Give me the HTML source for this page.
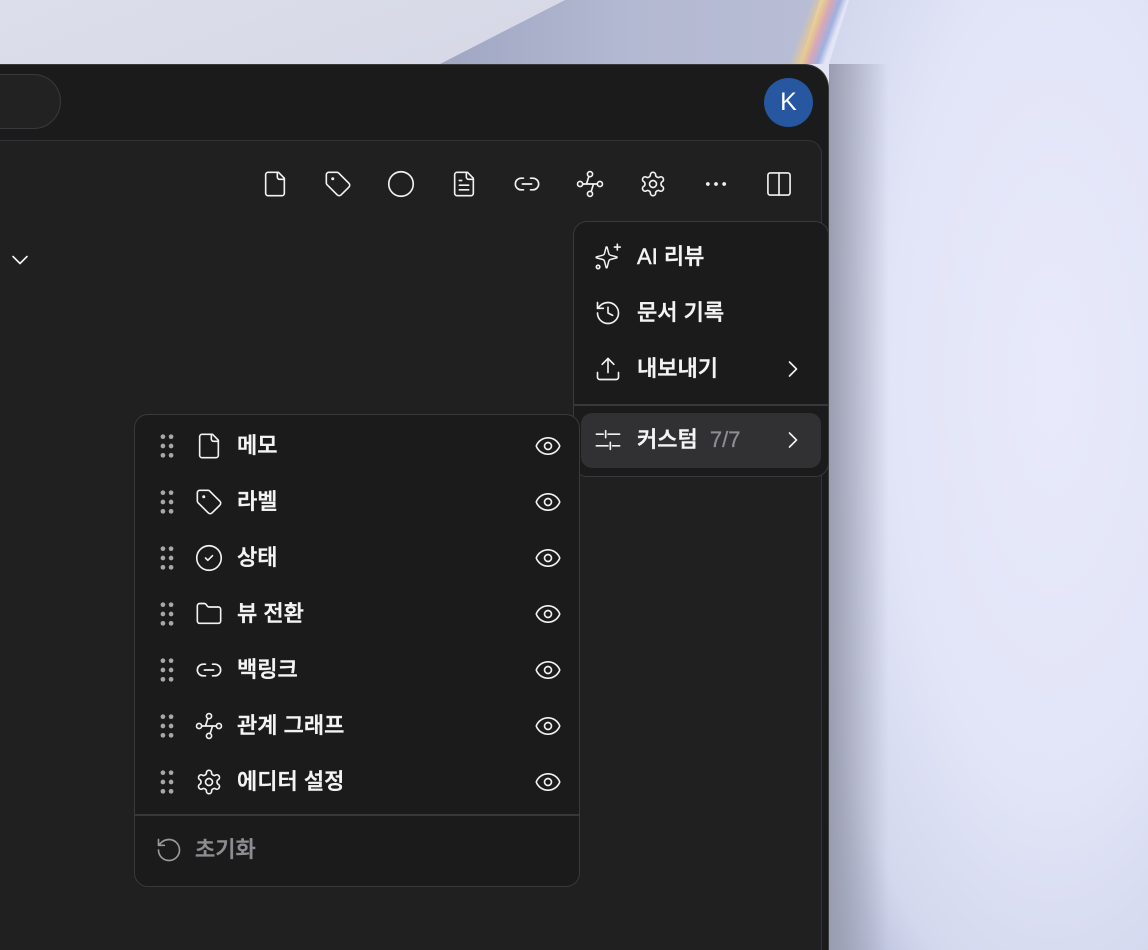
<!DOCTYPE html>
<html><head><meta charset="utf-8"><style>
*{margin:0;padding:0;box-sizing:border-box}
html,body{width:1148px;height:950px;overflow:hidden}
body{position:relative;background:#e3e5f5;font-family:"Liberation Sans","Noto Sans CJK KR",sans-serif}
.bg1{position:absolute;inset:0;background:linear-gradient(160deg,#dcdeeb 0%,#c8cbdc 60%,#c0c4d6 100%);clip-path:polygon(0 0,565px 0,440px 64px,0 64px)}
.bg2{position:absolute;inset:0;background:linear-gradient(90deg,#5a6688 0%,#8f98b6 25%,#b4b9d2 55%,#bfc3db 100%);clip-path:polygon(565px 0,820px 0,800px 64px,440px 64px)}
.rb{position:absolute;left:800px;top:0;width:36px;height:64px;background:linear-gradient(90deg,rgba(230,210,150,0),#e6c98f 35%,#d9a7b8 55%,#9fb0df 80%,rgba(180,195,235,0));transform:skewX(-20deg)}
.bg3{position:absolute;left:829px;top:0;right:0;bottom:0;background:radial-gradient(ellipse at 70% 40%,#e8eafb 0%,#e2e5f7 50%,#d4d8ee 80%,#aab2d0 100%);clip-path:polygon(20px 0,100% 0,100% 100%,0 100%,0 64px)}
.sh{position:absolute;left:829px;top:64px;width:60px;bottom:0;background:linear-gradient(90deg,#9a9db0,rgba(210,213,232,0))}
.win{position:absolute;left:-30px;top:64px;width:859px;height:886px;background:#1b1b1b;border-radius:0 24px 0 0;border:1px solid #3a3a3a;border-left:none;border-bottom:none}
.pill{position:absolute;left:-40px;top:74px;width:101px;height:55px;border:1.5px solid #3a3a3e;border-radius:28px;background:#222}
.av{position:absolute;left:764px;top:78px;width:49px;height:49px;border-radius:50%;background:#2657a0;color:#fff;font-size:25px;text-align:center;line-height:49px}
.panel{position:absolute;left:-20px;top:140px;width:842px;height:810px;background:#202020;border:1.5px solid #343438;border-bottom:none;border-radius:0 14px 0 0}
svg.i{position:absolute;width:28px;height:28px;fill:none;stroke:#f2f2f2;stroke-width:1.4;stroke-linecap:round;stroke-linejoin:round}
.menu{position:absolute;background:#1b1b1b;border:1.5px solid #3a3a3c;border-radius:14px}
.t{position:absolute;color:#f4f4f4;font-size:22px;font-weight:500;line-height:26px;white-space:nowrap;-webkit-text-stroke:0.45px currentColor}
.hl{position:absolute;left:581px;top:413px;width:240px;height:55px;background:#313133;border-radius:11px}
.dv{position:absolute;height:1.5px;background:#38383a}
</style></head><body>
<div class="bg1"></div><div class="bg2"></div><div class="rb"></div><div class="bg3"></div><div class="sh"></div>
<div class="win"></div>
<div class="pill"></div>
<div class="av">K</div>
<div class="panel"></div>

<svg width="0" height="0" style="position:absolute">
<defs>
<g id="file"><path d="M15 2H6a2 2 0 0 0-2 2v16a2 2 0 0 0 2 2h12a2 2 0 0 0 2-2V7Z"/><path d="M14 2v4a2 2 0 0 0 2 2h4"/></g>
<g id="tag"><path d="M12.586 2.586A2 2 0 0 0 11.172 2H4a2 2 0 0 0-2 2v7.172a2 2 0 0 0 .586 1.414l8.704 8.704a2.426 2.426 0 0 0 3.42 0l6.58-6.58a2.426 2.426 0 0 0 0-3.420z"/><circle cx="7.5" cy="7.5" r=".6"/></g>
<g id="ftext"><path d="M15 2H6a2 2 0 0 0-2 2v16a2 2 0 0 0 2 2h12a2 2 0 0 0 2-2V7Z"/><path d="M14 2v4a2 2 0 0 0 2 2h4"/><path d="M10 9H8M16 13H8M16 17H8"/></g>
<g id="link"><path d="M9 17H7A5 5 0 0 1 7 7h2M15 7h2a5 5 0 1 1 0 10h-2M8 12h8"/></g>
<g id="graph"><circle cx="12" cy="3.5" r="2.2"/><circle cx="3.5" cy="12" r="2.2"/><circle cx="20.5" cy="12" r="2.2"/><circle cx="12" cy="20.5" r="2.2"/><path d="M5.7 12h12.6M11 5.6 9 12M15 12l-2 6.4"/></g>
<g id="gear"><path d="M12.22 2h-.44a2 2 0 0 0-2 2v.18a2 2 0 0 1-1 1.73l-.43.25a2 2 0 0 1-2 0l-.15-.08a2 2 0 0 0-2.730.73l-.22.38a2 2 0 0 0 .73 2.73l.15.1a2 2 0 0 1 1 1.72v.51a2 2 0 0 1-1 1.74l-.15.09a2 2 0 0 0-.73 2.73l.22.38a2 2 0 0 0 2.73.73l.15-.08a2 2 0 0 1 2 0l.43.25a2 2 0 0 1 1 1.73V20a2 2 0 0 0 2 2h.44a2 2 0 0 0 2-2v-.18a2 2 0 0 1 1-1.73l.43-.25a2 2 0 0 1 2 0l.15.08a2 2 0 0 0 2.73-.73l.22-.39a2 2 0 0 0-.73-2.73l-.15-.08a2 2 0 0 1-1-1.74v-.5a2 2 0 0 1 1-1.74l.15-.09a2 2 0 0 0 .73-2.73l-.22-.38a2 2 0 0 0-2.73-.73l-.15.08a2 2 0 0 1-2 0l-.43-.25a2 2 0 0 1-1-1.73V4a2 2 0 0 0-2-2z"/><circle cx="12" cy="12" r="3"/></g>
<g id="eye"><path d="M2.06 12.35a1 1 0 0 1 0-.7 10.75 10.75 0 0 1 19.88 0 1 1 0 0 1 0 .7 10.75 10.75 0 0 1-19.88 0"/><circle cx="12" cy="12" r="3"/></g>
<g id="grip" fill="#a8a8a8" stroke="none"><circle cx="8.5" cy="4" r="2"/><circle cx="15.5" cy="4" r="2"/><circle cx="8.5" cy="12" r="2"/><circle cx="15.5" cy="12" r="2"/><circle cx="8.5" cy="20" r="2"/><circle cx="15.5" cy="20" r="2"/></g>
<g id="chev"><path d="m9 18 6-6-6-6"/></g>
</defs></svg>

<!-- toolbar -->
<svg class="i" style="left:261px;top:170px" viewBox="0 0 24 24"><use href="#file"/></svg>
<svg class="i" style="left:324px;top:170px" viewBox="0 0 24 24"><use href="#tag"/></svg>
<svg class="i" style="left:387px;top:170px" viewBox="0 0 24 24"><circle cx="12" cy="12" r="10.5"/></svg>
<svg class="i" style="left:450px;top:170px" viewBox="0 0 24 24"><use href="#ftext"/></svg>
<svg class="i" style="left:513px;top:170px" viewBox="0 0 24 24"><use href="#link"/></svg>
<svg class="i" style="left:576px;top:170px" viewBox="0 0 24 24"><use href="#graph"/></svg>
<svg class="i" style="left:639px;top:170px" viewBox="0 0 24 24"><use href="#gear"/></svg>
<svg class="i" style="left:702px;top:170px" viewBox="0 0 24 24"><circle cx="5" cy="12" r=".9" fill="#f2f2f2"/><circle cx="12" cy="12" r=".9" fill="#f2f2f2"/><circle cx="19" cy="12" r=".9" fill="#f2f2f2"/></svg>
<svg class="i" style="left:765px;top:170px" viewBox="0 0 24 24"><rect x="2.5" y="2.5" width="19" height="19" rx="2"/><path d="M12 2.5v19"/></svg>
<svg class="i" style="left:6px;top:246px" viewBox="0 0 24 24"><path d="m6 9 6 6 6-6"/></svg>

<!-- dropdown -->
<div class="menu" style="left:573px;top:221px;width:256px;height:256px"></div>
<div class="hl"></div>
<div class="dv" style="left:574px;top:404px;width:254px"></div>
<svg class="i" style="left:594px;top:243px" viewBox="0 0 24 24"><path d="M9.937 15.5A2 2 0 0 0 8.5 14.063l-6.135-1.582a.5.5 0 0 1 0-.962L8.5 9.936A2 2 0 0 0 9.937 8.5l1.582-6.135a.5.5 0 0 1 .963 0L14.063 8.5A2 2 0 0 0 15.5 9.937l6.135 1.581a.5.5 0 0 1 0 .964L15.5 14.063a2 2 0 0 0-1.437 1.437l-1.582 6.135a.5.5 0 0 1-.963 0z" transform="translate(0 1.5) scale(.9)"/><path d="M20 1v5M22.5 3.5h-5"/><circle cx="3.5" cy="20.5" r="1.5"/></svg>
<div class="t" style="left:637px;top:244px">AI 리뷰</div>
<svg class="i" style="left:594px;top:299px" viewBox="0 0 24 24"><path d="M3 12a9 9 0 1 0 9-9 9.75 9.75 0 0 0-6.74 2.74L3 8"/><path d="M3 3v5h5"/><path d="M12 7v5l4 2"/></svg>
<div class="t" style="left:637px;top:300px">문서 기록</div>
<svg class="i" style="left:594px;top:355px" viewBox="0 0 24 24"><path d="M21 15v4a2 2 0 0 1-2 2H5a2 2 0 0 1-2-2v-4"/><path d="m17 8-5-5-5 5"/><path d="M12 3v12"/></svg>
<div class="t" style="left:637px;top:356px">내보내기</div>
<svg class="i" style="left:779px;top:355px" viewBox="0 0 24 24"><use href="#chev"/></svg>
<svg class="i" style="left:594px;top:426px" viewBox="0 0 24 24"><path d="M2 7h6M12 7h10M10 4v6M2 17h10M16 17h6M14 14v6"/></svg>
<div class="t" style="left:637px;top:427px">커스텀 <span style="color:#8e8e92;margin-left:6px;-webkit-text-stroke:0.3px #8e8e92">7/7</span></div>
<svg class="i" style="left:779px;top:426px" viewBox="0 0 24 24"><use href="#chev"/></svg>

<!-- submenu -->
<div class="menu" style="left:134px;top:414px;width:446px;height:473px"></div>
<div class="dv" style="left:135px;top:814px;width:444px"></div>

<svg class="i" style="left:153px;top:432px" viewBox="0 0 24 24"><use href="#grip"/></svg>
<svg class="i" style="left:195px;top:432px" viewBox="0 0 24 24"><use href="#file"/></svg>
<div class="t" style="left:237px;top:433px">메모</div>
<svg class="i" style="left:534px;top:432px" viewBox="0 0 24 24"><use href="#eye"/></svg>

<svg class="i" style="left:153px;top:488px" viewBox="0 0 24 24"><use href="#grip"/></svg>
<svg class="i" style="left:195px;top:488px" viewBox="0 0 24 24"><use href="#tag"/></svg>
<div class="t" style="left:237px;top:489px">라벨</div>
<svg class="i" style="left:534px;top:488px" viewBox="0 0 24 24"><use href="#eye"/></svg>

<svg class="i" style="left:153px;top:544px" viewBox="0 0 24 24"><use href="#grip"/></svg>
<svg class="i" style="left:195px;top:544px" viewBox="0 0 24 24"><circle cx="12" cy="12" r="10.5"/><path d="m9 12 2 2 4-4"/></svg>
<div class="t" style="left:237px;top:545px">상태</div>
<svg class="i" style="left:534px;top:544px" viewBox="0 0 24 24"><use href="#eye"/></svg>

<svg class="i" style="left:153px;top:600px" viewBox="0 0 24 24"><use href="#grip"/></svg>
<svg class="i" style="left:195px;top:600px" viewBox="0 0 24 24"><path d="M20 20a2 2 0 0 0 2-2V8a2 2 0 0 0-2-2h-7.9a2 2 0 0 1-1.69-.9L9.6 3.9A2 2 0 0 0 7.93 3H4a2 2 0 0 0-2 2v13a2 2 0 0 0 2 2Z"/></svg>
<div class="t" style="left:237px;top:601px">뷰 전환</div>
<svg class="i" style="left:534px;top:600px" viewBox="0 0 24 24"><use href="#eye"/></svg>

<svg class="i" style="left:153px;top:656px" viewBox="0 0 24 24"><use href="#grip"/></svg>
<svg class="i" style="left:195px;top:656px" viewBox="0 0 24 24"><use href="#link"/></svg>
<div class="t" style="left:237px;top:657px">백링크</div>
<svg class="i" style="left:534px;top:656px" viewBox="0 0 24 24"><use href="#eye"/></svg>

<svg class="i" style="left:153px;top:712px" viewBox="0 0 24 24"><use href="#grip"/></svg>
<svg class="i" style="left:195px;top:712px" viewBox="0 0 24 24"><use href="#graph"/></svg>
<div class="t" style="left:237px;top:713px">관계 그래프</div>
<svg class="i" style="left:534px;top:712px" viewBox="0 0 24 24"><use href="#eye"/></svg>

<svg class="i" style="left:153px;top:768px" viewBox="0 0 24 24"><use href="#grip"/></svg>
<svg class="i" style="left:195px;top:768px" viewBox="0 0 24 24"><use href="#gear"/></svg>
<div class="t" style="left:237px;top:769px">에디터 설정</div>
<svg class="i" style="left:534px;top:768px" viewBox="0 0 24 24"><use href="#eye"/></svg>

<svg class="i" style="left:155px;top:836px;stroke:#9a9a9e" viewBox="0 0 24 24"><path d="M3 12a9 9 0 1 0 9-9 9.75 9.75 0 0 0-6.74 2.74L3 8"/><path d="M3 3v5h5"/></svg>
<div class="t" style="left:195px;top:837px;color:#8e8e92">초기화</div>
</body></html>
